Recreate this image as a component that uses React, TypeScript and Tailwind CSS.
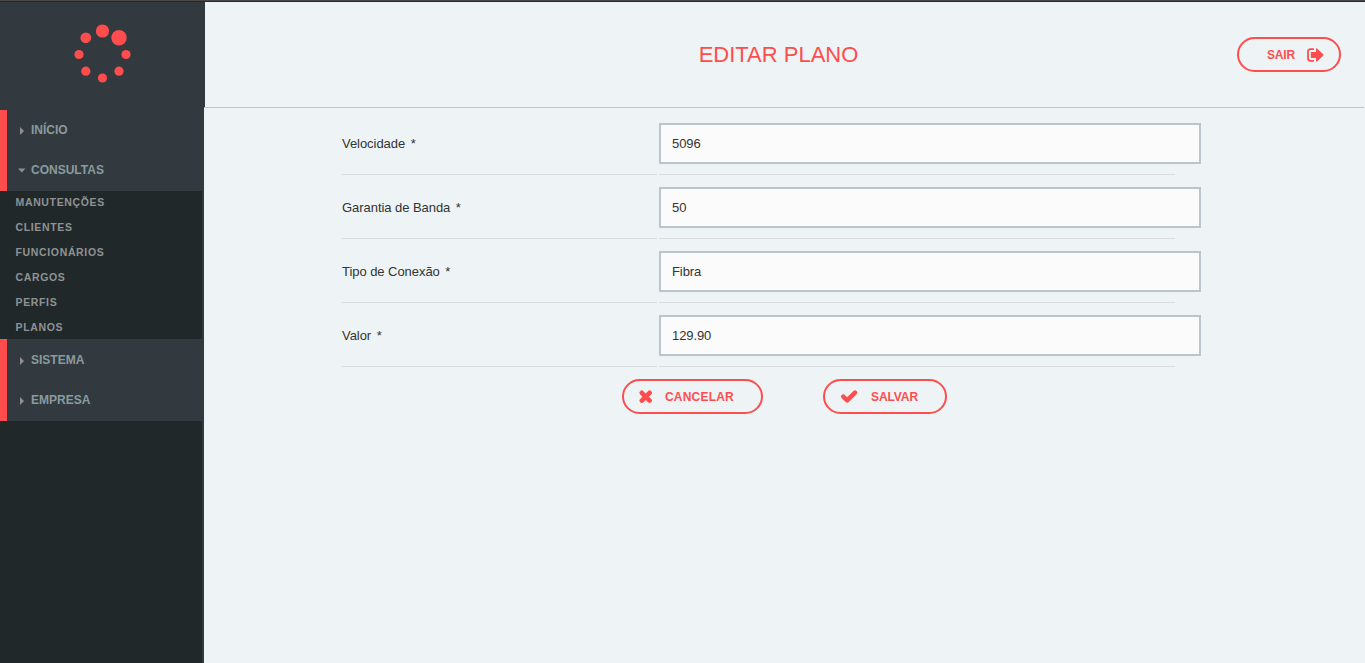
import type { ReactNode } from "react";

const SUBMENU = ["MANUTENÇÕES", "CLIENTES", "FUNCIONÁRIOS", "CARGOS", "PERFIS", "PLANOS"];

const FIELDS = [
  { label: "Velocidade", value: "5096" },
  { label: "Garantia de Banda", value: "50" },
  { label: "Tipo de Conexão", value: "Fibra" },
  { label: "Valor", value: "129.90" },
];

const DOTS = [
  [28.5, 7, 6.6],
  [45, 13.7, 7.7],
  [52, 30.5, 4.6],
  [45, 47.2, 4.6],
  [28.5, 54, 4.6],
  [11.8, 47.2, 4.6],
  [5, 30.5, 4.6],
  [11.8, 13.8, 5.4],
];

function Logo() {
  return (
    <svg width="57" height="62" viewBox="0 0 57 62" fill="#ff4d4d">
      {DOTS.map(([x, y, r], i) => (
        <circle key={i} cx={x} cy={y} r={r} />
      ))}
    </svg>
  );
}

function MenuItem({ label, open = false }: { label: string; open?: boolean }) {
  return (
    <a className="flex h-10 items-center pl-[11px] text-[12px] font-bold leading-none text-[#8a9a9c]">
      <svg width="8" height="8" viewBox="0 0 8 8" fill="#958c8e" className="mr-[5px] mt-px shrink-0">
        {open ? <path d="M0 1.500h7.500L3.750 5.500z" /> : <path d="M2 0v8l4-4z" />}
      </svg>
      {label}
    </a>
  );
}

function Pill({ className, children }: { className: string; children: ReactNode }) {
  return (
    <button
      className={`flex h-[35px] shrink-0 items-center rounded-full border-2 border-[#ff4d4d] text-[12px] font-bold leading-none text-[#ff4d4d] ${className}`}
    >
      {children}
    </button>
  );
}

export default function App() {
  return (
    <div className="flex h-[663px] w-[1365px] flex-col overflow-hidden bg-[#eef3f6] font-['Liberation_Sans',Arial,sans-serif]">
      <div className="h-[2px] shrink-0 border-b border-[#2b2727] bg-[#4b4949]" />
      <div className="flex h-[105px] shrink-0">
        <div className="flex w-[205px] justify-center bg-[#323a40] pt-[22px]">
          <Logo />
        </div>
        <header className="grid flex-1 grid-cols-[1fr_auto_1fr] items-center pl-[11px] pr-6">
          <span />
          <h1 className="text-[22px] leading-none text-[#ff4d4d]">EDITAR PLANO</h1>
          <Pill className="w-[104px] justify-self-end pl-7 tracking-[-0.15px]">
            SAIR
            <svg width="17" height="14" viewBox="0 0 17 14" className="ml-[11.500px] shrink-0" fill="#ff4d4d">
              <path d="M7 1.200H3.500Q1 1.200 1 3.700v6.600q0 2.500 2.500 2.500H7" fill="none" stroke="#ff4d4d" strokeWidth="1.800" />
              <path d="M4.500 4H9V1q0-1.200 1-.4L16.400 6.500q.5.500 0 1L10 13.400q-1 .8-1-.4V10H4.500q-.7 0-.7-.7V4.700q0-.7.7-.7z" />
            </svg>
          </Pill>
        </header>
      </div>
      <div className="flex flex-1">
        <aside className="w-[204px] shrink-0 border-r-2 border-[#323a40] bg-[#21282a]">
          <div className="h-[3px] bg-[#323a40]" />
          <div className="h-[81px] border-l-[7px] border-[#ff4d4d] bg-[#323a40]">
            <MenuItem label="INÍCIO" />
            <MenuItem label="CONSULTAS" open />
          </div>
          <ul className="h-[148px]">
            {SUBMENU.map((item) => (
              <li key={item} className="h-[25px] pl-[15.500px] text-[10.500px] font-bold leading-[23px] tracking-[0.650px] text-[#8f9294]">
                {item}
              </li>
            ))}
          </ul>
          <div className="h-[82px] border-l-[7px] border-[#ff4d4d] bg-[#323a40] pt-px">
            <MenuItem label="SISTEMA" />
            <MenuItem label="EMPRESA" />
          </div>
        </aside>
        <main className="flex-1 pr-px">
          <div className="h-px bg-[#bac5ce]" />
          <form className="ml-[138px] pt-[3px]">
            {FIELDS.map(({ label, value }) => (
              <div key={label} className="flex h-16 w-[833px] gap-[2px] text-[13px] text-[#333]">
                <label className="flex w-[315px] shrink-0 border-b border-[#dadcde] pt-[23px] leading-[20px] tracking-[-0.050px]">
                  {label}
                  <span className="ml-[5.500px]">*</span>
                </label>
                <div className="min-w-0 flex-1 border-b border-[#dadcde] pt-3">
                  <input
                    defaultValue={value}
                    className="h-[41px] w-[542px] border-2 border-[#bac5ce] bg-[#fbfbfb] px-[11px] tracking-[-0.100px] outline-none"
                  />
                </div>
              </div>
            ))}
            <div className="ml-[280px] mt-3 flex gap-[60px]">
              <Pill className="w-[141px] pl-[15px] tracking-[0.200px]">
                <svg width="14" height="14" viewBox="0 0 14 14" className="mr-3 shrink-0">
                  <path
                    d="M2.800 2.800l7.800 7.800M10.600 2.800l-7.800 7.800"
                    stroke="#ff4d4d"
                    strokeWidth="4.600"
                    strokeLinecap="round"
                  />
                </svg>
                CANCELAR
              </Pill>
              <Pill className="w-[124px] pl-4 tracking-[-0.100px]">
                <svg width="17" height="14" viewBox="0 0 17 14" className="mr-[13px] shrink-0">
                  <path
                    d="M2.300 6.600l3.900 3.800L14 2.600"
                    fill="none"
                    stroke="#ff4d4d"
                    strokeWidth="4.400"
                    strokeLinecap="round"
                    strokeLinejoin="round"
                  />
                </svg>
                SALVAR
              </Pill>
            </div>
          </form>
        </main>
      </div>
    </div>
  );
}
